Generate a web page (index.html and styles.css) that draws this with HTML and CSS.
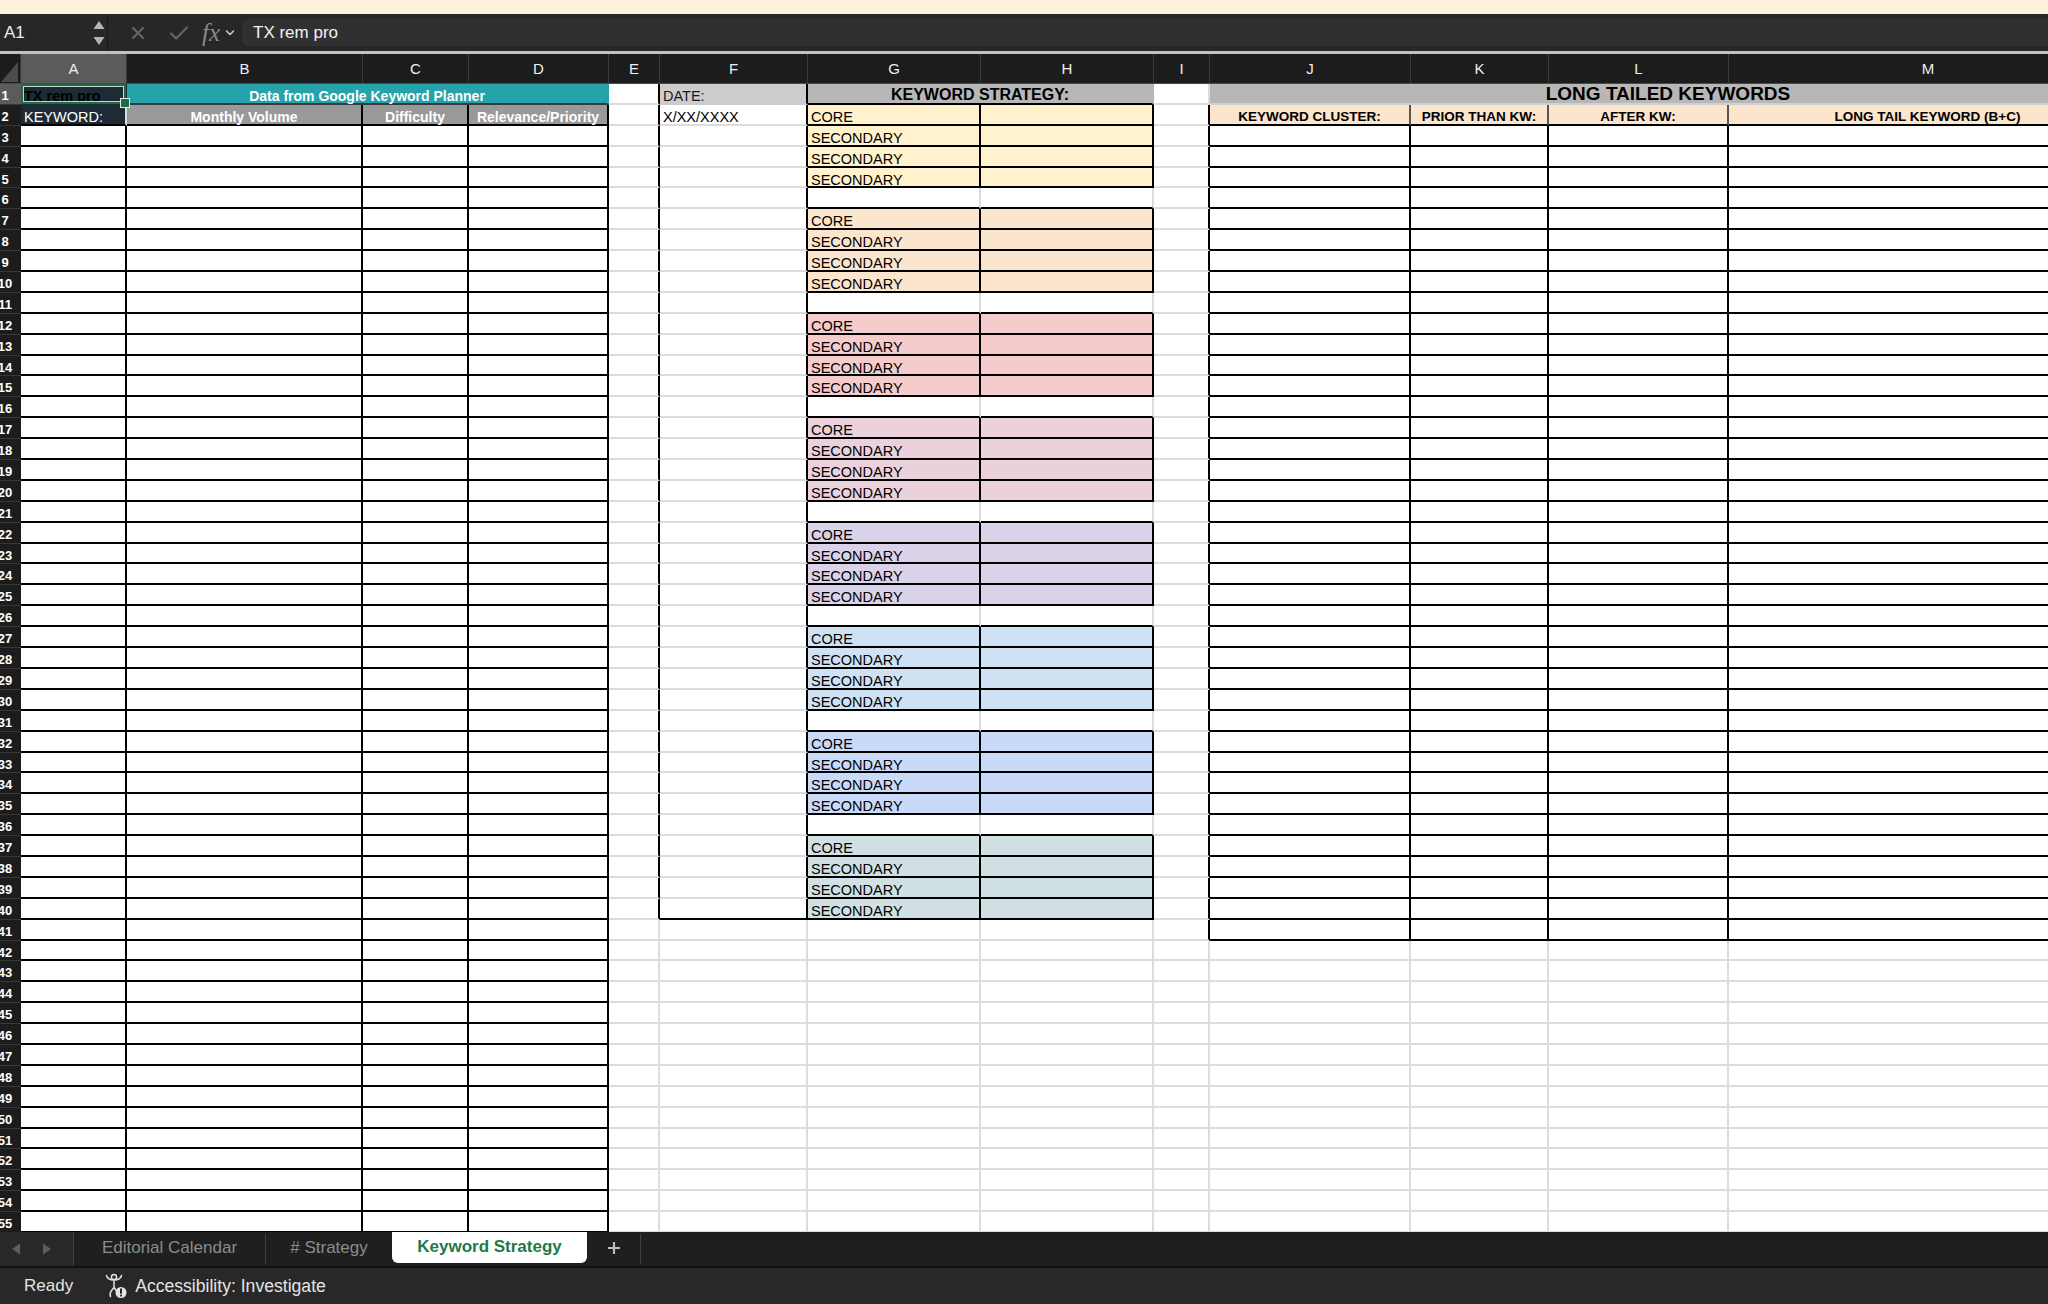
FILE: index.html
```html
<!DOCTYPE html>
<html lang="en">
<head>
  <meta charset="UTF-8">
  <meta name="viewport" content="width=device-width, initial-scale=1.0">
  <link rel="stylesheet" href="styles.css">
  <title>Keyword Strategy</title>
</head>
<body>
  <div class="app">
    <div class="notice"></div>

    <div class="formula_bar">
      <div class="name_box">
        <span class="name_ref">A1</span>
        <svg class="stepper" width="12" height="26" viewBox="0 0 12 26">
          <path d="M6 1 L11.5 9 H0.5 Z" fill="#b5b5b5"/>
          <path d="M6 25 L11.5 17 H0.5 Z" fill="#b5b5b5"/>
        </svg>
      </div>
      <div class="fx_tools">
        <svg class="ico_x" width="16" height="16" viewBox="0 0 16 16">
          <path d="M3 3 L13 13 M13 3 L3 13" stroke="#646464" stroke-width="2.2" stroke-linecap="round"/>
        </svg>
        <svg class="ico_ok" width="20" height="16" viewBox="0 0 20 16">
          <path d="M2 8.5 L7 13.5 L18 2.5" stroke="#646464" stroke-width="2.2" fill="none" stroke-linecap="round" stroke-linejoin="round"/>
        </svg>
        <span class="fx">fx</span>
        <svg class="ico_down" width="10" height="8" viewBox="0 0 10 8">
          <path d="M1.5 2 L5 5.5 L8.5 2" stroke="#c8c8c8" stroke-width="1.6" fill="none" stroke-linecap="round" stroke-linejoin="round"/>
        </svg>
      </div>
      <div class="formula_input">TX rem pro</div>
    </div>

    <div class="sheet_wrap">
      <div class="sheet" id="sheet"></div>
    </div>

    <div class="tab_bar">
      <div class="tab_nav">
        <svg width="10" height="12" viewBox="0 0 10 12"><path d="M9 0.5 V11.5 L1 6 Z" fill="#5e5e5e"/></svg>
        <svg width="10" height="12" viewBox="0 0 10 12"><path d="M1 0.5 V11.5 L9 6 Z" fill="#5e5e5e"/></svg>
      </div>
      <div class="tab tab_editorial">Editorial Calendar</div>
      <div class="tab tab_strategy"># Strategy</div>
      <div class="tab tab_active">Keyword Strategy</div>
      <div class="tab tab_add">
        <svg width="16" height="16" viewBox="0 0 16 16"><path d="M8 2 V14 M2 8 H14" stroke="#bdbdbd" stroke-width="2.2"/></svg>
      </div>
    </div>

    <div class="status_bar">
      <span class="status_ready">Ready</span>
      <svg class="ico_access" width="24" height="26" viewBox="0 0 24 26">
        <circle cx="10" cy="4" r="2.6" fill="none" stroke="#e4e4e4" stroke-width="1.5"/>
        <path d="M2.5 2.5 C4 8.5 16 8.5 17.5 2.5" fill="none" stroke="#e4e4e4" stroke-width="1.5" stroke-linecap="round"/>
        <path d="M10 8.5 V14.5 M10 14.5 C8 17 5 18.5 6.5 23.5 M10 14.5 C11 15.5 11.5 16.5 11.5 17" fill="none" stroke="#e4e4e4" stroke-width="1.5" stroke-linecap="round"/>
        <circle cx="17" cy="19.5" r="5.5" fill="#e4e4e4"/>
        <path d="M17 16.2 V20" stroke="#282828" stroke-width="2" stroke-linecap="round"/>
        <circle cx="17" cy="22.6" r="1.1" fill="#282828"/>
      </svg>
      <span class="status_text">Accessibility: Investigate</span>
    </div>
  </div>

<script>
  const sheet = document.getElementById('sheet');
  const letters = ['A','B','C','D','E','F','G','H','I','J','K','L','M'];
  const groupStarts = [2,7,12,17,22,27,32,37];

  function addCell(cls, text){
    const div = document.createElement('div');
    div.className = cls;
    if(text) div.textContent = text;
    sheet.append(div);
    return div;
  }

  function groupOf(row){
    for(let i=0;i<groupStarts.length;i++){
      const start = groupStarts[i];
      if(row>=start && row<start+4) return {index:i+1, start:start};
    }
    return null;
  }

  // column headers
  addCell('corner').innerHTML = '<svg width="21" height="30" viewBox="0 0 21 30"><path d="M1 28 H18 V8 Z" fill="#4b4b4b"/></svg>';
  letters.forEach((l,i)=>addCell(i===0 ? 'ch ch_sel' : 'ch', l));

  for(let r=1;r<=55;r++){
    addCell(r===1 ? 'rh rh_sel' : 'rh').innerHTML = '<span>'+r+'</span>';

    if(r===1){
      addCell('cell navy a1', 'TX rem pro');
      addCell('cell teal span3', 'Data from Google Keyword Planner');
      addCell('cell br');
      addCell('cell date br', 'DATE:');
      addCell('cell strat span2 bb', 'KEYWORD STRATEGY:');
      addCell('cell');
      addCell('cell longtail span4', 'LONG TAILED KEYWORDS');
      continue;
    }

    // A - D
    if(r===2){
      addCell('cell navy kw bb', 'KEYWORD:');
      ['Monthly Volume','Difficulty','Relevance/Priority'].forEach(t=>addCell('cell planner br bb', t));
    } else {
      for(let c=0;c<4;c++) addCell('cell br bb');
    }

    // E, F
    addCell(r<=40 ? 'cell br' : 'cell');
    if(r<=40){
      addCell(r===40 ? 'cell br bb' : 'cell br', r===2 ? 'X/XX/XXXX' : '');
    } else {
      addCell('cell');
    }

    // G, H
    const grp = groupOf(r);
    if(grp){
      addCell('cell grp'+grp.index+' br bb', r===grp.start ? 'CORE' : 'SECONDARY');
      addCell('cell grp'+grp.index+' br bb');
    } else if(r<=40){
      addCell('cell bb');
      addCell('cell bb');
    } else {
      addCell('cell');
      addCell('cell');
    }

    // I
    addCell(r<=41 ? 'cell br' : 'cell');

    // J - M
    if(r===2){
      ['KEYWORD CLUSTER:','PRIOR THAN KW:','AFTER KW:','LONG TAIL KEYWORD (B+C)'].forEach(t=>addCell('cell peach br bb', t));
    } else {
      for(let c=0;c<4;c++) addCell(r<=41 ? 'cell br bb' : 'cell');
    }
  }
</script>
</body>
</html>
```

FILE: styles.css
```css
*{
  box-sizing:border-box;
}
html,body{
  margin:0; padding:0;
}
body{
  background:#1e1e1e; overflow:hidden;
  font-family:"Liberation Sans", Arial, sans-serif;
}

.app{
  width:2048px; height:1304px; overflow:hidden;
  display:flex; flex-direction:column;
}

.notice{
  height:14px; flex:none; background:#fbf1dc;
}

/* formula bar */
.formula_bar{
  height:40px; flex:none; display:flex; align-items:center;
  background:#272727; border-bottom:3px solid #c2c2c2;
}
.name_box{
  width:108px; height:100%; flex:none;
  display:flex; align-items:center; justify-content:space-between;
  padding:0 2px 0 4px; border-right:1px solid #1a1a1a;
  color:#ececec; font-size:17px;
}
.fx_tools{
  width:134px; height:100%; flex:none;
  display:flex; align-items:center; padding-left:22px;
}
.ico_ok{ margin-left:23px; }
.fx{
  margin-left:13px; color:#8a8a8a; font-size:25px; font-style:italic;
  font-family:"Liberation Serif", "DejaVu Serif", serif;
}
.ico_down{ margin-left:5px; }
.formula_input{
  flex:1; height:27px; line-height:27px;
  background:#303030; border-radius:6px 0 0 6px;
  padding-left:11px; color:#f2f2f2; font-size:17px;
}

/* sheet */
.sheet_wrap{
  flex:1; min-height:0; overflow:hidden; background:#fff;
}
.sheet{
  display:grid; width:2128px;
  grid-template-columns:21px 106px 236px 106px 140px 51px 148px 173px 173px 56px 201px 138px 180px 399px;
  grid-template-rows:30px;
  grid-auto-rows:20.9px;
}

.corner{
  background:#1c1c1c; border-right:1px solid #3a3a3a; border-bottom:1px solid #4a4a4a;
}
.ch{
  background:#1c1c1c; color:#f0f0f0; font-size:15px;
  text-align:center; line-height:29px;
  border-right:1px solid #3a3a3a; border-bottom:1px solid #4a4a4a;
}
.ch_sel{ background:#5b5b5b; }

.rh{
  background:#1c1c1c; color:#fff; font-size:13px; font-weight:bold;
  border-bottom:1px solid #383838; overflow:hidden;
  padding-top:4px; line-height:16px;
}
.rh span{
  display:block; width:30px; margin-left:-10px; text-align:center;
}
.rh_sel{ background:#5b5b5b; }

.cell{
  background:#fff; color:#000; font-size:14.5px; white-space:nowrap;
  padding:4px 3px 0; line-height:16px;
  border-right:2px solid #dcdcdc; border-bottom:2px solid #dcdcdc;
}
.br{ border-right-color:#000; }
.bb{ border-bottom-color:#000; }
.span2{ grid-column:span 2; }
.span3{ grid-column:span 3; }
.span4{ grid-column:span 4; }

.navy{ background:#1d2b36; }
.a1{
  position:relative; z-index:2; font-weight:bold; color:#000;
  border-right-color:#1d2b36; border-bottom-color:#1d2b36;
}
.a1::before{
  content:''; position:absolute; left:0; top:0; right:-1px; bottom:-1px;
  border:2px solid #1e6b45; box-shadow:inset 0 0 0 1px #c9d3cd;
}
.a1::after{
  content:''; position:absolute; right:-5px; bottom:-5px; width:8px; height:8px;
  background:#1e6b45; border:1px solid #e8e8e8;
}
.kw{ color:#fff; }

.teal{
  background:#26a2aa; color:#fff; font-weight:bold; font-size:14px; text-align:center;
  border-right-color:#26a2aa; border-bottom-color:#3a3a3a;
}
.planner{
  background:#999; color:#fff; font-weight:bold; font-size:14px; text-align:center;
}

.date{ background:#ccc; color:#1a1a1a; border-bottom-color:#ccc; }
.strat{
  background:#b7b7b7; font-weight:bold; font-size:16px; text-align:center;
  padding-top:3px; border-right-color:#b7b7b7;
}
.longtail{
  background:#b7b7b7; font-weight:bold; font-size:19px; text-align:center;
  padding-top:2px; border-right-color:#b7b7b7; border-bottom-color:#d0d0d0;
}
.peach{
  background:#fce5cd; font-weight:bold; font-size:13.5px; text-align:center;
  border-right-color:#555;
}

.grp1{ background:#fff2cc; }
.grp2{ background:#fce5cd; }
.grp3{ background:#f4cccc; }
.grp4{ background:#ead1dc; }
.grp5{ background:#d9d2e9; }
.grp6{ background:#cfe2f3; }
.grp7{ background:#c9daf8; }
.grp8{ background:#d0e0e3; }

/* sheet tabs */
.tab_bar{
  height:34px; flex:none; display:flex; background:#1f1f1f;
}
.tab_nav{
  width:74px; flex:none; display:flex; align-items:center;
  padding-left:11px; gap:21px;
  background:#292929; border-right:1px solid #3e3e3e;
}
.tab{
  flex:none; display:flex; align-items:center; justify-content:center;
  color:#8c8c8c; font-size:17px; padding-bottom:2px;
}
.tab_editorial{ width:192px; border-right:1px solid #3e3e3e; margin:2px 0; }
.tab_strategy{ width:126px; }
.tab_active{
  width:195px; height:31px;
  background:#fff; color:#1f7a47; font-weight:bold;
  border-radius:0 0 6px 6px;
}
.tab_add{ width:54px; border-right:1px solid #3e3e3e; margin:2px 0; }

/* status bar */
.status_bar{
  height:38px; flex:none; display:flex; align-items:center;
  background:#282828; border-top:2px solid #111;
  padding-left:24px; color:#e4e4e4; font-size:17px;
}
.ico_access{ margin-left:31px; margin-right:7px; }
.status_text{ font-size:17.6px; }
```
